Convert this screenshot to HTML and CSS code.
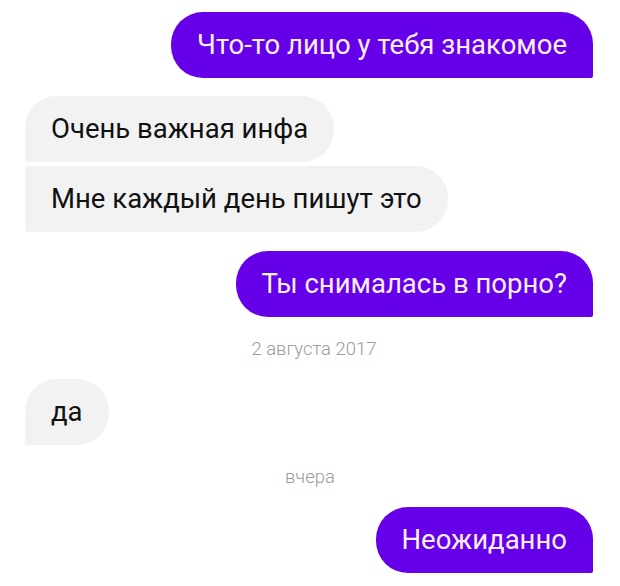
FILE: index.html
```html
<!DOCTYPE html>
<html lang="ru">
<head>
    <meta charset="UTF-8">
    <title>Чат</title>
    <link rel="stylesheet" href="styles.css">
</head>
<body>
    <div class="chat">
        <div class="msg out">Что-то лицо у тебя знакомое</div>
        <div class="group">
            <div class="msg in first">Очень важная инфа</div>
            <div class="msg in middle">Мне каждый день пишут это</div>
        </div>
        <div class="msg out">Ты снималась в порно?</div>
        <div class="stamp date">2 августа 2017</div>
        <div class="msg in">да</div>
        <div class="stamp yesterday">вчера</div>
        <div class="msg out">Неожиданно</div>
    </div>
</body>
</html>
```

FILE: styles.css
```css
body {
    margin: 0;
    background: #ffffff;
    font-family: Roboto, "Noto Sans", sans-serif;
}
.chat {
    display: flex;
    flex-direction: column;
    padding: 12px 27px 0 25px;
}
.group {
    display: flex;
    flex-direction: column;
    gap: 4px;
    margin-top: 18px;
}
.msg {
    box-sizing: border-box;
    height: 66px;
    padding: 0 26px;
    line-height: 66px;
    font-size: 27.5px;
    border-radius: 32px;
    white-space: nowrap;
}
.out {
    align-self: flex-end;
    background: #6600e8;
    color: #fbefff;
    border-bottom-right-radius: 2px;
}
.in {
    align-self: flex-start;
    background: #f2f2f2;
    color: #111111;
    border-bottom-left-radius: 2px;
}
.in.middle {
    border-top-left-radius: 2px;
}
.group + .out {
    margin-top: 19px;
}
.stamp {
    align-self: center;
    color: #9a9a9a;
    font-size: 18.5px;
    font-weight: 300;
    line-height: 22px;
}
.date {
    margin: 21px 0 19px 10px;
}
.yesterday {
    margin: 21px 0 19px 2px;
}
```
